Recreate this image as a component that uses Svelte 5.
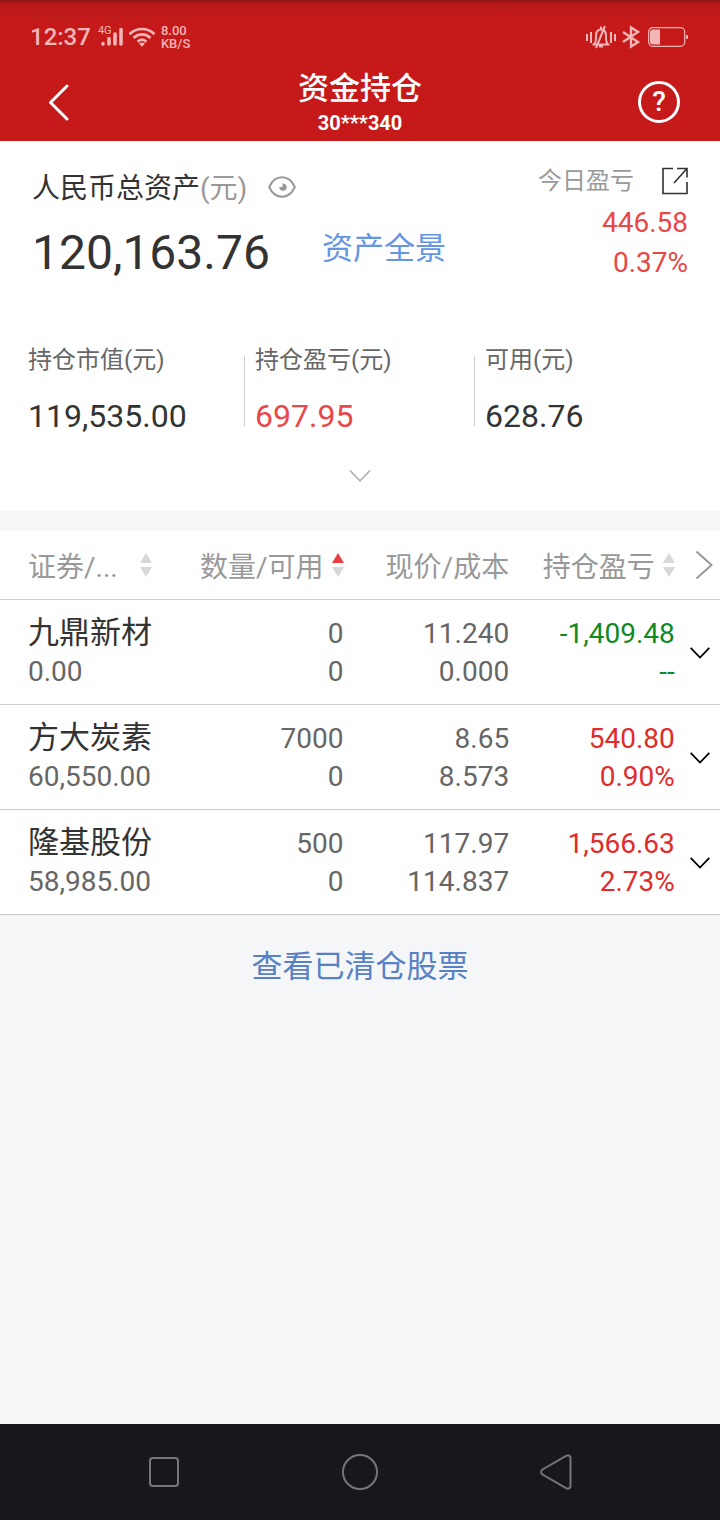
<script lang="ts">
  type SortDir = 'none' | 'asc' | 'desc';

  const stats = [
    { label: '持仓市值(元)', value: '119,535.00', tone: '' },
    { label: '持仓盈亏(元)', value: '697.95', tone: 'up' },
    { label: '可用(元)', value: '628.76', tone: '' }
  ];

  const columns: { label: string; sort: SortDir | null }[] = [
    { label: '证券/...', sort: 'none' },
    { label: '数量/可用', sort: 'asc' },
    { label: '现价/成本', sort: null },
    { label: '持仓盈亏', sort: 'none' }
  ];

  const holdings = [
    { name: '九鼎新材', worth: '0.00', qty: '0', usable: '0', price: '11.240', cost: '0.000', profit: '-1,409.48', rate: '--', tone: 'loss' },
    { name: '方大炭素', worth: '60,550.00', qty: '7000', usable: '0', price: '8.65', cost: '8.573', profit: '540.80', rate: '0.90%', tone: 'gain' },
    { name: '隆基股份', worth: '58,985.00', qty: '500', usable: '0', price: '117.97', cost: '114.837', profit: '1,566.63', rate: '2.73%', tone: 'gain' }
  ];
</script>

<div class="screen" lang="zh-CN">
  <header class="top">
    <div class="status">
      <span class="clock">12:37</span>
      <span class="signal">
        <small>4G</small>
        <svg width="22" height="20" viewBox="0 0 22 20" stroke="currentColor" stroke-width="3.6" stroke-linecap="round">
          <path d="M2 16.5v.4M8 11.5v5.5M14 7v10M20 2.5v14.5" />
        </svg>
      </span>
      <svg class="wifi" width="28" height="20" viewBox="0 0 28 20" fill="none" stroke="currentColor" stroke-width="2.6">
        <path d="M1.5 7.2C8.5.3 19.5.3 26.5 7.2M5.5 11c5-4.8 12-4.8 17 0M9.500 14.7c2.8-2.6 6.2-2.6 9 0" />
        <path d="M14 19.8l-3-3.2q3-2 6 0z" fill="currentColor" stroke="none" />
      </svg>
      <span class="speed">8.00<br />KB/S</span>
      <svg class="mute" width="30" height="24" viewBox="0 0 30 24" fill="none" stroke="currentColor" stroke-width="2">
        <path d="M1 9v7M5 7v11M25 7v11M29 9v7" />
        <path d="M6.5 19.5h17M8.5 19c1.5-2 1.5-5 1.5-8 0-4 2-6.5 5-6.500s5 2.5 5 6.5c0 3 0 6 1.5 8M19 1L10 23M15 1.5v3M13 21.5h4" />
      </svg>
      <svg class="bluetooth" width="18" height="24" viewBox="0 0 18 24" fill="none" stroke="currentColor" stroke-width="2.4">
        <path d="M1 7l15 10-7 4.500v-19L16 7 1 17" />
      </svg>
      <svg width="40" height="20" viewBox="0 0 40 20">
        <rect x=".7" y=".7" width="36" height="18.6" rx="4" fill="none" stroke="currentColor" stroke-width="1.2" />
        <path d="M5 2.5h7v15H5q-3 0-3-3v-9q0-3 3-3zM38 8h1q1 0 1 1v2q0 1-1 1h-1z" fill="currentColor" />
      </svg>
    </div>
    <div class="nav">
      <button class="back" aria-label="返回">
        <svg width="24" height="38" viewBox="0 0 24 38" fill="none" stroke="currentColor" stroke-width="3" stroke-linecap="round" stroke-linejoin="round">
          <path d="M18 3L1.500 19.500 18 36" />
        </svg>
      </button>
      <div class="title">
        <h1>资金持仓</h1>
        <p>30***340</p>
      </div>
      <button class="help" aria-label="帮助">?</button>
    </div>
  </header>

  <section class="summary">
    <div class="assets">
      <div class="total">
        <div class="total-label">
          <span>人民币总资产<em>(元)</em></span>
          <button aria-label="隐藏金额">
            <svg width="28" height="22" viewBox="0 0 28 22" fill="none" stroke="#999" stroke-width="2">
              <path d="M1.2 11C7-2 21-2 26.8 11 21 24 7 24 1.2 11z" />
              <path d="M14.5 7.5a3.700 3.700 0 1 1-3.2 3.5h3.2z" fill="#999" stroke="none" />
            </svg>
          </button>
        </div>
        <div class="total-value">
          <strong>120,163.76</strong>
          <a href="#overview">资产全景</a>
        </div>
      </div>
      <div class="today">
        <div class="today-label">
          <span>今日盈亏</span>
          <button aria-label="分享">
            <svg width="26" height="28" viewBox="0 0 26 28" fill="none" stroke="#333" stroke-width="1.6">
              <path d="M11 1.5H1v25h24V15M15 1.5h10v9M25 1.5L12 16" />
            </svg>
          </button>
        </div>
        <p>446.58</p>
        <p>0.37%</p>
      </div>
    </div>

    <dl class="stats">
      {#each stats as stat}
        <div class="stat">
          <dt>{stat.label}</dt>
          <dd class={stat.tone}>{stat.value}</dd>
        </div>
      {/each}
    </dl>

    <button class="expand" aria-label="展开">
      <svg width="22" height="14" viewBox="0 0 22 14" fill="none" stroke="#aaa" stroke-width="1.5">
        <path d="M1 1.5l10 10.5L21 1.5" />
      </svg>
    </button>
  </section>

  <table class="holdings">
    <colgroup>
      <col class="col-name" />
      <col class="col-data" />
      <col class="col-data" />
      <col class="col-data" />
      <col class="col-more" />
    </colgroup>
    <thead>
      <tr>
        {#each columns as col}
          <th scope="col">
            {#if col.sort}
              <button class="sort">
                <span>{col.label}</span>
                <svg width="12" height="24" viewBox="0 0 12 24" fill="#d8d8d8">
                  <path class:active={col.sort === 'asc'} d="M6 0l6 10H0z" />
                  <path class:active={col.sort === 'desc'} d="M6 24l6-10H0z" />
                </svg>
              </button>
            {:else}
              {col.label}
            {/if}
          </th>
        {/each}
        <th class="more">
          <button aria-label="更多列">
            <svg width="18" height="30" viewBox="0 0 18 30" fill="none" stroke="#999" stroke-width="2">
              <path d="M1.5 1.5L16.500 15l-15 13.5" />
            </svg>
          </button>
        </th>
      </tr>
    </thead>
    <tbody>
      {#each holdings as row}
        <tr>
          <td><b>{row.name}</b><span>{row.worth}</span></td>
          <td><span>{row.qty}</span><span>{row.usable}</span></td>
          <td><span>{row.price}</span><span>{row.cost}</span></td>
          <td class={row.tone}><span>{row.profit}</span><span>{row.rate}</span></td>
          <td class="more">
            <button aria-label="展开{row.name}">
              <svg width="20" height="12" viewBox="0 0 20 12" fill="none" stroke="#000" stroke-width="1.8">
                <path d="M.7.8L10 10.500 19.300.8" />
              </svg>
            </button>
          </td>
        </tr>
      {/each}
    </tbody>
  </table>

  <a class="cleared" href="#cleared">查看已清仓股票</a>

  <nav class="system" aria-label="系统导航">
    <button aria-label="最近任务">
      <svg width="36" height="36" viewBox="0 0 36 36"><rect x="4" y="4" width="28" height="28" rx="3" /></svg>
    </button>
    <button aria-label="主页">
      <svg width="36" height="36" viewBox="0 0 36 36"><circle cx="18" cy="18" r="17" /></svg>
    </button>
    <button aria-label="后退">
      <svg width="36" height="36" viewBox="0 0 36 36"><path d="M4.5 15.5L28 1.8q4.500-1.5 4.5 2.7v27q0 4.2-4.5 2.7L4.5 20.500q-3-2.5 0-5z" /></svg>
    </button>
  </nav>
</div>

<style>
  :global(body) {
    background: #f4f6f8;
  }

  .screen {
    display: flex;
    flex-direction: column;
    min-height: 100vh;
    font-family: Roboto, 'Noto Sans CJK SC', sans-serif;
    font-size: 28px;
    color: #333;
  }

  button {
    display: flex;
    align-items: center;
    justify-content: center;
    margin: 0;
    padding: 0;
    border: 0;
    background: none;
    font: inherit;
    color: inherit;
    cursor: pointer;
  }

  svg {
    display: block;
    flex: none;
  }

  a {
    text-decoration: none;
  }

  h1,
  p,
  dl,
  dd {
    margin: 0;
  }

  .top {
    background: linear-gradient(#8f1414, #b91919 4px, #c51a19 24px);
    color: #fff;
  }

  .status {
    display: flex;
    align-items: center;
    height: 50px;
    padding: 12px 32px 0 30px;
    color: #f2b6b6;
  }

  .clock {
    font-size: 24px;
    font-weight: 500;
  }

  .signal {
    position: relative;
    margin-left: 10px;
  }

  .signal small {
    position: absolute;
    top: -2px;
    left: -3px;
    font-size: 11px;
    line-height: 12px;
  }

  .wifi {
    margin: 0 5px;
  }

  .speed {
    font-size: 13px;
    font-weight: 500;
    line-height: 13px;
  }

  .mute {
    margin-left: auto;
  }

  .bluetooth {
    margin: 0 8px 0 6px;
  }

  .nav {
    display: flex;
    align-items: center;
    justify-content: space-between;
    height: 79px;
    padding: 0 40px;
  }

  .back,
  .help {
    box-sizing: border-box;
    width: 42px;
    height: 42px;
  }

  .help {
    border: 3px solid #fff;
    border-radius: 50%;
    font-size: 28px;
    font-weight: 500;
  }

  .title {
    padding-top: 2px;
    text-align: center;
  }

  .title h1 {
    font-size: 31px;
    font-weight: 500;
    line-height: 40px;
  }

  .title p {
    font-size: 20px;
    font-weight: 700;
    line-height: 28px;
  }

  .summary {
    display: flex;
    flex-direction: column;
    background: #fff;
    border-bottom: 20px solid #f4f6f8;
  }

  .assets {
    display: flex;
    justify-content: space-between;
    padding: 20px 32px 0;
  }

  .total-label {
    display: flex;
    gap: 21px;
    padding-top: 2px;
    line-height: 52px;
  }

  .total-label button {
    height: 48px;
  }

  .total-label em {
    font-style: normal;
    color: #999;
  }

  .total-value {
    display: flex;
    gap: 52px;
    line-height: 76px;
  }

  .total-value strong {
    font-size: 48px;
    font-weight: 400;
  }

  .total-value a {
    font-size: 31px;
    line-height: 68px;
    color: #6496e4;
  }

  .today {
    text-align: right;
    line-height: 40px;
    color: #e84848;
  }

  .today-label {
    display: flex;
    gap: 28px;
    margin-bottom: 2px;
    font-size: 24px;
    color: #999;
  }

  .stats {
    display: grid;
    grid-template-columns: 244fr 230fr 246fr;
    padding-top: 55px;
  }

  .stat {
    height: 70px;
    margin-top: 10px;
    padding-left: 10px;
    border-left: 1px solid #ccc;
  }

  .stat:first-child {
    padding-left: 28px;
    border-left: 0;
  }

  .stat dt {
    margin-top: -12px;
    font-size: 24px;
    line-height: 32px;
    color: #666;
  }

  .stat dd {
    padding-top: 18px;
    font-size: 32px;
    line-height: 44px;
  }

  .stat .up {
    color: #e84848;
  }

  .expand {
    align-self: center;
    width: 60px;
    height: 54px;
    margin: 23px 0 8px;
  }

  .holdings {
    width: 100%;
    table-layout: fixed;
    border-collapse: separate;
    border-spacing: 0;
    background: #fff;
    color: #666;
  }

  .col-name {
    width: 177px;
  }

  .col-data {
    width: 23%;
  }

  .col-more {
    width: 45px;
  }

  th,
  td {
    padding: 0;
    border-bottom: 1px solid #ccc;
    text-align: right;
    white-space: nowrap;
  }

  th {
    height: 68px;
    font-weight: 400;
    color: #999;
  }

  td {
    padding: 15px 0 13px;
    line-height: 38px;
  }

  th:first-child,
  td:first-child {
    padding-left: 28px;
    text-align: left;
  }

  td b,
  td span {
    display: block;
  }

  td b {
    height: 38px;
    font-size: 31px;
    font-weight: 400;
    line-height: 36px;
    color: #333;
  }

  .sort {
    gap: 8px;
    margin-left: auto;
  }

  th:first-child .sort {
    gap: 22px;
    margin-left: 0;
  }

  .sort .active {
    fill: #e84040;
  }

  .gain {
    color: #e02c2c;
  }

  .loss {
    color: #0f8a24;
  }

  .more button {
    width: 20px;
    height: 40px;
    margin-left: 15px;
  }

  th.more button {
    margin-left: 19px;
  }

  .cleared {
    align-self: center;
    padding: 28px 0;
    font-size: 31px;
    line-height: 48px;
    color: #5880c4;
  }

  .system {
    display: grid;
    grid-template-columns: repeat(3, 1fr);
    height: 96px;
    margin-top: auto;
    padding: 0 66px;
    background: #17181c;
  }

  .system svg {
    fill: none;
    stroke: #77777b;
    stroke-width: 2;
  }
</style>
